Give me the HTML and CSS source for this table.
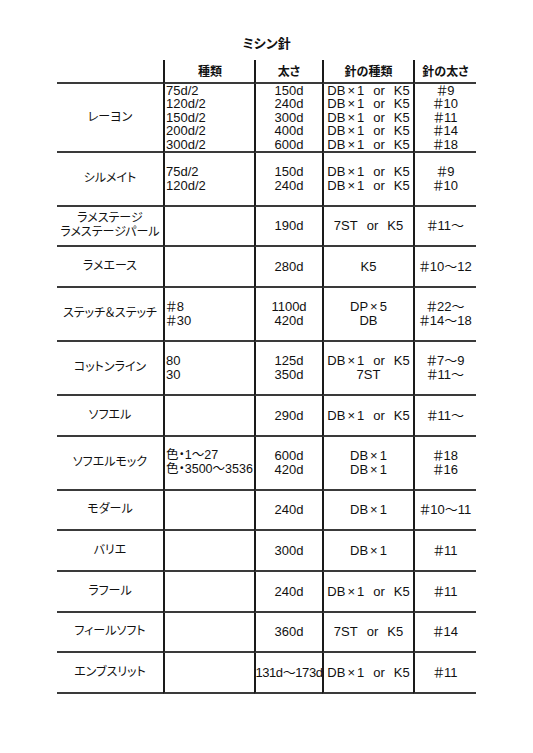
FILE: index.html
```html
<!DOCTYPE html>
<html lang="ja">
<head>
<meta charset="utf-8">
<title>ミシン針</title>
<link rel="stylesheet" href="styles.css">
</head>
<body>
<div class="page">
  <h1 class="title">ミシン針</h1>
  <div class="sheet">
    <div class="cell head c1"></div>
    <div class="cell head c2">種類</div>
    <div class="cell head c3">太さ</div>
    <div class="cell head c4">針の種類</div>
    <div class="cell head c5">針の太さ</div>

    <div class="cell c1">レーヨン</div>
    <div class="cell c2">75d/2<br>120d/2<br>150d/2<br>200d/2<br>300d/2</div>
    <div class="cell c3">150d<br>240d<br>300d<br>400d<br>600d</div>
    <div class="cell c4">
      <span>DB<span class="x">×</span>1<span class="or">or</span>K5</span>
      <span>DB<span class="x">×</span>1<span class="or">or</span>K5</span>
      <span>DB<span class="x">×</span>1<span class="or">or</span>K5</span>
      <span>DB<span class="x">×</span>1<span class="or">or</span>K5</span>
      <span>DB<span class="x">×</span>1<span class="or">or</span>K5</span>
    </div>
    <div class="cell c5">＃9<br>＃10<br>＃11<br>＃14<br>＃18</div>

    <div class="cell c1">シルメイト</div>
    <div class="cell c2">75d/2<br>120d/2</div>
    <div class="cell c3">150d<br>240d</div>
    <div class="cell c4">
      <span>DB<span class="x">×</span>1<span class="or">or</span>K5</span>
      <span>DB<span class="x">×</span>1<span class="or">or</span>K5</span>
    </div>
    <div class="cell c5">＃9<br>＃10</div>

    <div class="cell c1"><span>ラメステージ</span><span>ラメステージパール</span></div>
    <div class="cell c2"></div>
    <div class="cell c3">190d</div>
    <div class="cell c4"><span>7ST<span class="or">or</span>K5</span></div>
    <div class="cell c5">＃11～</div>

    <div class="cell c1">ラメエース</div>
    <div class="cell c2"></div>
    <div class="cell c3">280d</div>
    <div class="cell c4">K5</div>
    <div class="cell c5">＃10～12</div>

    <div class="cell c1">ステッチ＆ステッチ</div>
    <div class="cell c2 pal">＃8<br>＃30</div>
    <div class="cell c3">1100d<br>420d</div>
    <div class="cell c4">
      <span>DP<span class="x">×</span>5</span>
      <span>DB</span>
    </div>
    <div class="cell c5">＃22～<br>＃14～18</div>

    <div class="cell c1">コットンライン</div>
    <div class="cell c2">80<br>30</div>
    <div class="cell c3">125d<br>350d</div>
    <div class="cell c4">
      <span>DB<span class="x">×</span>1<span class="or">or</span>K5</span>
      <span>7ST</span>
    </div>
    <div class="cell c5">＃7～9<br>＃11～</div>

    <div class="cell c1">ソフエル</div>
    <div class="cell c2"></div>
    <div class="cell c3">290d</div>
    <div class="cell c4"><span>DB<span class="x">×</span>1<span class="or">or</span>K5</span></div>
    <div class="cell c5">＃11～</div>

    <div class="cell c1">ソフエルモック</div>
    <div class="cell c2 mixed">色・1～27<br>色・3500～3536</div>
    <div class="cell c3">600d<br>420d</div>
    <div class="cell c4">
      <span>DB<span class="x">×</span>1</span>
      <span>DB<span class="x">×</span>1</span>
    </div>
    <div class="cell c5">＃18<br>＃16</div>

    <div class="cell c1">モダール</div>
    <div class="cell c2"></div>
    <div class="cell c3">240d</div>
    <div class="cell c4"><span>DB<span class="x">×</span>1</span></div>
    <div class="cell c5">＃10～11</div>

    <div class="cell c1">バリエ</div>
    <div class="cell c2"></div>
    <div class="cell c3">300d</div>
    <div class="cell c4"><span>DB<span class="x">×</span>1</span></div>
    <div class="cell c5">＃11</div>

    <div class="cell c1">ラフール</div>
    <div class="cell c2"></div>
    <div class="cell c3">240d</div>
    <div class="cell c4"><span>DB<span class="x">×</span>1<span class="or">or</span>K5</span></div>
    <div class="cell c5">＃11</div>

    <div class="cell c1">フィールソフト</div>
    <div class="cell c2"></div>
    <div class="cell c3">360d</div>
    <div class="cell c4"><span>7ST<span class="or">or</span>K5</span></div>
    <div class="cell c5">＃14</div>

    <div class="cell c1">エンブスリット</div>
    <div class="cell c2"></div>
    <div class="cell c3 tight">131d～173d</div>
    <div class="cell c4"><span>DB<span class="x">×</span>1<span class="or">or</span>K5</span></div>
    <div class="cell c5">＃11</div>
  </div>
</div>
</body>
</html>
```

FILE: styles.css
```css
html, body {
  margin: 0;
  padding: 0;
  background: #ffffff;
}

body {
  font-family: "Liberation Sans", "Noto Sans CJK JP", sans-serif;
  color: #111111;
  font-size: 13px;
}

.page {
  width: 533px;
  padding-top: 34px;
}

.title {
  margin: 0 0 8px 0;
  height: 18px;
  line-height: 18px;
  font-size: 13px;
  font-weight: 700;
  text-align: center;
  font-family: "Noto Sans CJK JP", sans-serif;
  font-feature-settings: "palt";
}

.sheet {
  margin-left: 57px;
  width: 419px;
  display: grid;
  grid-template-columns: 106px 91px 68px 91px 63px;
  grid-template-rows: 24px 69px 54px 40px 41px 54px 54px 41px 54px 40px 41px 41px 40px 41px;
}

.cell {
  box-sizing: border-box;
  border-bottom: 2px solid #3a3a3a;
  line-height: 13.6px;
  display: flex;
  flex-direction: column;
  justify-content: center;
  white-space: nowrap;
}

.c2, .c3, .c4, .c5 {
  border-left: 2px solid #1a1a1a;
}

.c1, .c3, .c4, .c5 {
  text-align: center;
  align-items: center;
}

.c1 {
  font-size: 12px;
  font-family: "Liberation Sans", "Noto Sans CJK JP", sans-serif;
  font-feature-settings: "palt";
}

.c2 {
  text-align: left;
  padding-left: 1px;
}

.c5, .pal {
  font-size: 13px;
  font-feature-settings: "palt";
}

.mixed {
  font-size: 12.5px;
  font-feature-settings: "palt";
}

.x {
  margin: 0 2px;
}

.or {
  margin: 0 9px;
}

.head {
  font-size: 12px;
  font-weight: 700;
  font-family: "Noto Sans CJK JP", sans-serif;
  font-feature-settings: "palt";
  justify-content: flex-end;
  align-items: center;
  text-align: center;
  padding-bottom: 4px;
}

.tight {
  letter-spacing: -0.4px;
}
```
